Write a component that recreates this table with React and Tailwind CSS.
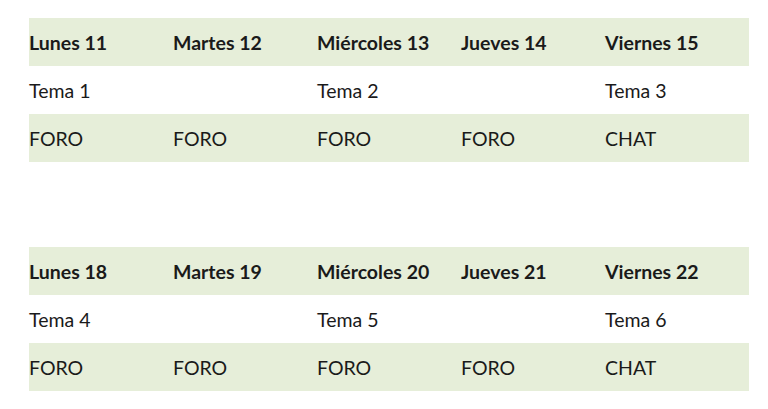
const weeks = [
  {
    days: ['Lunes 11', 'Martes 12', 'Miércoles 13', 'Jueves 14', 'Viernes 15'],
    temas: ['Tema 1', '', 'Tema 2', '', 'Tema 3'],
    tipos: ['FORO', 'FORO', 'FORO', 'FORO', 'CHAT'],
  },
  {
    days: ['Lunes 18', 'Martes 19', 'Miércoles 20', 'Jueves 21', 'Viernes 22'],
    temas: ['Tema 4', '', 'Tema 5', '', 'Tema 6'],
    tipos: ['FORO', 'FORO', 'FORO', 'FORO', 'CHAT'],
  },
]

const Row = ({ cells, shaded, bold }) => (
  <div className={`grid grid-cols-5 h-[48px] items-center ${shaded ? 'bg-[#e6eed9]' : 'bg-white'}`}>
    {cells.map((c, i) => (
      <div key={i} className={`pt-[2px] ${bold ? 'font-bold' : ''}`}>{c}</div>
    ))}
  </div>
)

export default function App() {
  return (
    <div
      className="w-[768px] h-[409px] bg-white text-[#1a1a1a] text-[19.5px] pt-[18px] pl-[29px] flex flex-col gap-[85px]"
      style={{ fontFamily: 'Lato, "Open Sans", sans-serif' }}
    >
      {weeks.map((w, i) => (
        <div key={i} className="w-[720px] flex flex-col">
          <Row cells={w.days} shaded bold />
          <Row cells={w.temas} />
          <Row cells={w.tipos} shaded />
        </div>
      ))}
    </div>
  )
}
